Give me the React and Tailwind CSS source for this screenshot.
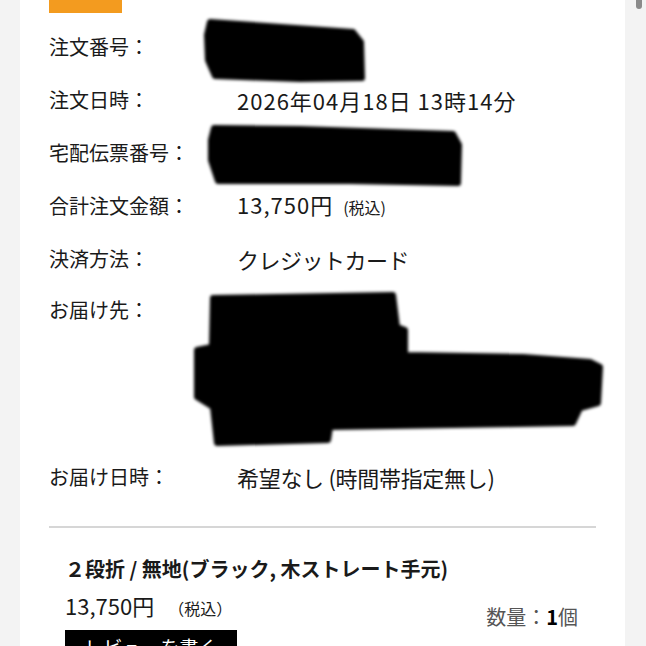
export default function App() {
  const rows = [
    { label: "注文番号：", blob: 1 },
    { label: "注文日時：", value: "2026年04月18日 13時14分", wide: true },
    { label: "宅配伝票番号：", blob: 2 },
    { label: "合計注文金額：", price: true },
    { label: "決済方法：", value: "クレジットカード" },
  ];

  return (
    <div className="relative min-h-screen overflow-hidden bg-[#f3f3f3] font-['Noto_Sans_CJK_JP',sans-serif] text-[#1a1a1a]">
      {/* scrollbar thumb */}
      <div className="absolute right-[4px] top-0 h-[9px] w-[6px] rounded-b-full bg-[#8a8a8a]" />

      <div className="ml-[20px] mr-[21px] min-h-[646px] bg-white pl-[29px] pr-[29px]">
        <div className="h-[13px] w-[73px] bg-[#f39b1f]" />

        <div className="mt-[7px]">
          {rows.map((r) => (
            <div key={r.label} className="relative flex h-[53px] items-center">
              <div className="w-[188px] text-[20px] leading-[28px]">{r.label}</div>
              <div className={r.wide || r.price ? "text-[22px] leading-[28px] tracking-[1px]" : "text-[22px] leading-[28px] tracking-[-0.5px]"}>
                {r.value}
                {r.price && (
                  <span>
                    13,750円<span className="ml-[10px] text-[16px] tracking-normal">(税込)</span>
                  </span>
                )}
              </div>
              {r.blob === 1 && (
                <svg className="absolute left-[154px] top-[-2px] blur-[1.5px]" width="163" height="66" viewBox="203 18 163 66">
                  <polygon points="210,22 353,32 361,42 362,78 300,79 215,76 208,60 207,35" fill="#000" stroke="#000" strokeWidth="6" strokeLinejoin="round" />
                </svg>
              )}
              {r.blob === 2 && (
                <svg className="absolute left-[159px] top-[-2px] blur-[1.5px]" width="254" height="64" viewBox="208 124 254 64">
                  <polygon points="214,128 300,129 453,134 459,145 458,183 350,181 218,181 211,160 211,140" fill="#000" stroke="#000" strokeWidth="6" strokeLinejoin="round" />
                </svg>
              )}
            </div>
          ))}

          <div className="relative flex h-[165px] items-start pt-[11px]">
            <div className="w-[188px] text-[20px] leading-[28px]">お届け先：</div>
            <svg className="absolute left-[144px] top-[6px] blur-[1.5px]" width="411" height="156" viewBox="193 291 411 156">
              <polygon
                points="213,298 393,295 397,327 405,330 405,355 523,357 590,362 600,367 598,403 580,408 573,423 330,427 328,440 217,443 213,407 197,397 197,350 212,347"
                fill="#000"
                stroke="#000"
                strokeWidth="6"
                strokeLinejoin="round"
              />
            </svg>
          </div>

          <div className="flex h-[53px] items-center">
            <div className="w-[188px] text-[20px] leading-[28px]">お届け日時：</div>
            <div className="text-[22px] leading-[28px] tracking-[-0.3px]">希望なし (時間帯指定無し)</div>
          </div>
        </div>

        <div className="mt-[23px] h-[2px] bg-[#d6d6d6]" />

        <div className="pl-[16px]">
          <div className="mt-[27px] text-[20px] font-bold leading-[28px]">２段折 / 無地(ブラック, 木ストレート手元)</div>
          <div className="flex justify-between">
            <div>
              <div className="mt-[8px] text-[22px] leading-[28px]">
                13,750円<span className="ml-[14px] text-[16px]">（税込）</span>
              </div>
              <div className="mt-[8px] flex h-[44px] w-[172px] items-center justify-center bg-black pb-[10px] text-[19px] text-white">
                レビューを書く
              </div>
            </div>
            <div className="mr-[18px] mt-[20px] text-[20px] leading-[28px] text-[#555]">
              数量：<span className="font-bold text-black">1</span>個
            </div>
          </div>
        </div>
      </div>
    </div>
  );
}
